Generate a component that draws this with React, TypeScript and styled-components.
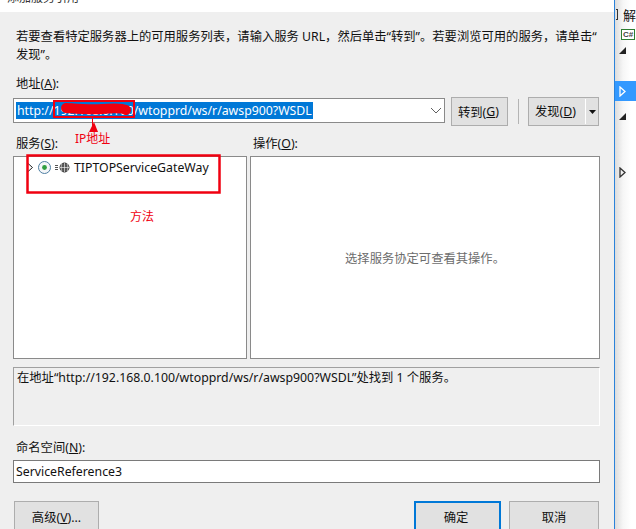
import React from "react";
import styled, { createGlobalStyle } from "styled-components";

const GlobalStyle = createGlobalStyle`
    html, body {
        margin: 0;
        padding: 0;
        background: #ffffff;
    }
    body {
        font-family: "Noto Sans", "Noto Sans CJK SC", sans-serif;
        font-size: 12.3px;
        color: #111111;
    }
`;

const App = () => {
    return (
        <Page>
            <GlobalStyle />
            <Dialog>
                <TitleBar>
                    <TitleText>添加服务引用</TitleText>
                </TitleBar>
                <Body>
                    <Intro>
                        若要查看特定服务器上的可用服务列表，请输入服务 URL，然后单击“转到”。若要浏览可用的服务，请单击“
                        <br />
                        发现”。
                    </Intro>
                    <AddressLabel>
                        地址(<u>A</u>):
                    </AddressLabel>
                    <AddressRow>
                        <Combo>
                            <Selected>http://192.168.0.100/wtopprd/ws/r/awsp900?WSDL</Selected>
                            <svg width="12" height="7" viewBox="0 0 12 7">
                                <path d="M1 1l5 5 5-5" fill="none" stroke="#606060" strokeWidth="1" />
                            </svg>
                        </Combo>
                        <GoButton>
                            转到(<u>G</u>)
                        </GoButton>
                        <Separator />
                        <SplitButton>
                            <SplitLabel>
                                发现(<u>D</u>)
                            </SplitLabel>
                            <SplitArrow>
                                <svg width="7" height="4" viewBox="0 0 7 4">
                                    <path d="M0 0h7L3.5 4z" fill="#111111" />
                                </svg>
                            </SplitArrow>
                        </SplitButton>
                    </AddressRow>
                    <Columns>
                        <ServiceColumn>
                            <PanelLabel>
                                服务(<u>S</u>):
                            </PanelLabel>
                            <Panel>
                                <TreeRow>
                                    <svg width="8" height="11" viewBox="0 0 8 11">
                                        <path d="M1.5 1l5 4.5-5 4.5z" fill="#ffffff" stroke="#222222" />
                                    </svg>
                                    <svg width="15" height="15" viewBox="0 0 15 15">
                                        <circle cx="7.5" cy="7.5" r="6" fill="#f4f6f8" stroke="#4f7fa3" />
                                        <circle cx="7.5" cy="7.5" r="2.4" fill="#2f9e3f" />
                                    </svg>
                                    <svg width="15" height="11" viewBox="0 0 15 11">
                                        <path d="M0 3.5h3M0 5.5h3M0 7.5h3" stroke="#555555" />
                                        <circle cx="9.5" cy="5.5" r="4.5" fill="#555555" stroke="#333333" />
                                        <path d="M5 5.5h9M9.5 1v9M7 1.6c-1.2 2.4-1.2 5.4 0 7.8M12 1.6c1.2 2.4 1.2 5.4 0 7.8" fill="none" stroke="#ffffff" strokeWidth=".6" />
                                    </svg>
                                    <TreeText>TIPTOPServiceGateWay</TreeText>
                                </TreeRow>
                            </Panel>
                        </ServiceColumn>
                        <OperationColumn>
                            <PanelLabel>
                                操作(<u>O</u>):
                            </PanelLabel>
                            <Panel>
                                <Placeholder>选择服务协定可查看其操作。</Placeholder>
                            </Panel>
                        </OperationColumn>
                    </Columns>
                    <StatusBox>在地址“http://192.168.0.100/wtopprd/ws/r/awsp900?WSDL”处找到 1 个服务。</StatusBox>
                    <NamespaceLabel>
                        命名空间(<u>N</u>):
                    </NamespaceLabel>
                    <NamespaceInput>ServiceReference3</NamespaceInput>
                    <Footer>
                        <AdvancedButton>
                            高级(<u>V</u>)...
                        </AdvancedButton>
                        <FooterActions>
                            <OkButton>确定</OkButton>
                            <CancelButton>取消</CancelButton>
                        </FooterActions>
                    </Footer>
                </Body>
            </Dialog>
            <SidePanel>
                <SideTitle>
                    <SideBracket />
                    <span>解</span>
                </SideTitle>
                <CSharpBadge>C#</CSharpBadge>
                <SideRow>
                    <svg width="7" height="7" viewBox="0 0 7 7">
                        <path d="M7 0v7H0z" fill="#222222" />
                    </svg>
                </SideRow>
                <SideRowSelected>
                    <svg width="7" height="11" viewBox="0 0 7 11">
                        <path d="M1 1l5 4.5L1 10z" fill="none" stroke="#ffffff" strokeWidth="1.3" />
                    </svg>
                </SideRowSelected>
                <SideRow>
                    <svg width="7" height="7" viewBox="0 0 7 7">
                        <path d="M7 0v7H0z" fill="#222222" />
                    </svg>
                </SideRow>
                <SideRowLast>
                    <svg width="7" height="11" viewBox="0 0 7 11">
                        <path d="M1 1l5 4.5L1 10z" fill="none" stroke="#333333" strokeWidth="1.3" />
                    </svg>
                </SideRowLast>
            </SidePanel>

            <AnnotationLayer width="636" height="529" viewBox="0 0 636 529">
                <path d="M66 108c14 1 24 2 36 1s20-1 24 1" fill="none" stroke="#f00010" strokeWidth="10" strokeLinecap="round" />
                <rect x="54" y="101" width="80" height="16" fill="none" stroke="#f00010" strokeWidth="2" />
                <path d="M92.5 117v15" stroke="#f00010" strokeWidth="1" />
                <path d="M94 122l4 10h-9z" fill="#f00010" />
                <rect x="27.5" y="155.5" width="192" height="37" fill="none" stroke="#f00010" strokeWidth="2.5" />
            </AnnotationLayer>
            <IpNote>IP地址</IpNote>
            <MethodNote>方法</MethodNote>
        </Page>
    );
};

export default App;

const Page = styled.div`
    position: relative;
    display: flex;
    width: 636px;
    height: 529px;
    overflow: hidden;
`;

const Dialog = styled.div`
    display: flex;
    flex-direction: column;
    width: 614px;
    flex-shrink: 0;
    background: #efefef;
    border-right: 1px solid #2a82da;
`;

const TitleBar = styled.div`
    height: 12px;
    background: #ffffff;
    overflow: hidden;
    flex-shrink: 0;
`;

const TitleText = styled.div`
    margin: -11px 0 0 7px;
    font-size: 12px;
    line-height: 18px;
    color: #333333;
`;

const Body = styled.div`
    display: flex;
    flex-direction: column;
    padding: 16px 14px 0 13px;
`;

const Intro = styled.div`
    padding-left: 3px;
    line-height: 18px;
    height: 36px;
    white-space: nowrap;
`;

const AddressLabel = styled.div`
    margin-top: 11px;
    padding-left: 3px;
    line-height: 18px;
`;

const AddressRow = styled.div`
    display: flex;
    align-items: flex-start;
    margin-top: 4px;
`;

const Combo = styled.div`
    display: flex;
    align-items: center;
    justify-content: space-between;
    box-sizing: border-box;
    width: 432px;
    height: 25px;
    margin-top: 1px;
    padding: 0 2px 0 2px;
    background: #ffffff;
    border: 1px solid #8a8a8a;
`;

const Selected = styled.span`
    background: #0078d7;
    color: #ffffff;
    line-height: 17px;
    padding: 0 1px;
    white-space: nowrap;
`;

const ButtonBase = styled.div`
    display: flex;
    align-items: center;
    justify-content: center;
    box-sizing: border-box;
    background: #e1e1e1;
    border: 1px solid #adadad;
`;

const GoButton = styled(ButtonBase)`
    width: 57px;
    height: 29px;
    margin-left: 6px;
    padding-right: 2px;
`;

const Separator = styled.div`
    width: 1px;
    height: 25px;
    margin: 2px 9px 0 10px;
    background: #b4b4b4;
`;

const SplitButton = styled(ButtonBase)`
    width: 71px;
    height: 29px;
    justify-content: flex-start;
`;

const SplitLabel = styled.div`
    box-sizing: border-box;
    width: 57px;
    padding-right: 3px;
    text-align: center;
    border-right: 1px solid #ffffff;
    line-height: 25px;
`;

const SplitArrow = styled.div`
    display: flex;
    justify-content: center;
    flex: 1;
`;

const Columns = styled.div`
    display: flex;
    gap: 3px;
    margin-top: 9px;
`;

const ServiceColumn = styled.div`
    display: flex;
    flex-direction: column;
    width: 234px;
`;

const OperationColumn = styled.div`
    display: flex;
    flex-direction: column;
    width: 350px;
`;

const PanelLabel = styled.div`
    padding-left: 3px;
    line-height: 18px;
    height: 21px;
`;

const Panel = styled.div`
    position: relative;
    display: flex;
    box-sizing: border-box;
    height: 203px;
    background: #ffffff;
    border: 1px solid #8a8a8a;
`;

const TreeRow = styled.div`
    display: flex;
    align-items: center;
    height: 20px;
    padding-left: 12px;
    gap: 3px;
`;

const TreeText = styled.span`
    margin-left: 1px;
    white-space: nowrap;
`;

const Placeholder = styled.div`
    margin: auto;
    color: #6d6d6d;
`;

const StatusBox = styled.div`
    box-sizing: border-box;
    height: 59px;
    margin-top: 8px;
    padding: 1px 3px;
    line-height: 18px;
    border-top: 1px solid #a0a0a0;
    border-left: 1px solid #a0a0a0;
    border-right: 1px solid #ffffff;
    border-bottom: 1px solid #ffffff;
`;

const NamespaceLabel = styled.div`
    margin-top: 13px;
    padding-left: 3px;
    line-height: 18px;
`;

const NamespaceInput = styled.div`
    box-sizing: border-box;
    height: 23px;
    margin-top: 3px;
    padding-left: 2px;
    line-height: 21px;
    background: #ffffff;
    border: 1px solid #7a7a7a;
`;

const Footer = styled.div`
    display: flex;
    justify-content: space-between;
    margin-top: 18px;
    padding: 0 1px;
`;

const AdvancedButton = styled(ButtonBase)`
    width: 85px;
    height: 32px;
`;

const FooterActions = styled.div`
    display: flex;
    gap: 8px;
`;

const OkButton = styled(ButtonBase)`
    width: 87px;
    height: 32px;
    padding-right: 3px;
    border: 2px solid #0078d7;
`;

const CancelButton = styled(ButtonBase)`
    width: 90px;
    height: 32px;
`;

const SidePanel = styled.div`
    display: flex;
    flex-direction: column;
    flex: 1;
    min-width: 0;
    overflow: hidden;
    background: linear-gradient(90deg, #dcdcdc 0, #f6f6f6 8px, #ffffff 16px);
`;

const SideTitle = styled.div`
    display: flex;
    gap: 5px;
    height: 29px;
    padding-top: 7px;
    box-sizing: border-box;
    font-size: 13px;
    line-height: 16px;
    white-space: nowrap;
    color: #111111;
`;

const SideBracket = styled.div`
    width: 1px;
    height: 9px;
    margin: 2px 0 0 1px;
    border-right: 1px solid #333333;
    border-top: 1px solid #333333;
    border-bottom: 1px solid #333333;
`;

const CSharpBadge = styled.div`
    box-sizing: border-box;
    width: 14px;
    height: 11px;
    margin-left: 6px;
    border: 1px solid #2f7d32;
    background: #ffffff;
    font-family: "Liberation Sans", sans-serif;
    font-size: 8px;
    font-weight: bold;
    line-height: 9px;
    text-align: center;
    color: #444444;
`;

const SideRow = styled.div`
    display: flex;
    align-items: center;
    height: 20px;
    padding-left: 4px;
`;

const SideRowSelected = styled(SideRow)`
    margin-top: 21px;
    background: #3399ff;
    margin-bottom: 5px;
`;

const SideRowLast = styled(SideRow)`
    margin-top: 36px;
`;

const AnnotationLayer = styled.svg`
    position: absolute;
    top: 0;
    left: 0;
    pointer-events: none;
`;

const IpNote = styled.div`
    position: absolute;
    left: 75px;
    top: 130px;
    font-size: 12px;
    line-height: 18px;
    color: #f00010;
`;

const MethodNote = styled.div`
    position: absolute;
    left: 130px;
    top: 208px;
    font-size: 12px;
    line-height: 18px;
    color: #f00010;
`;
